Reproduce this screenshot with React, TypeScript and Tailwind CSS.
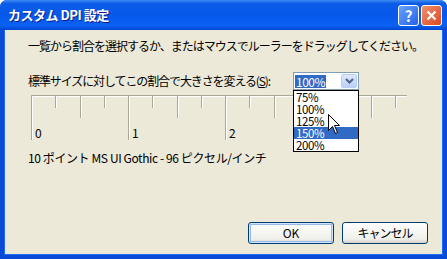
import React from "react";

const font = { fontFamily: '"MS UI Gothic", "Noto Sans CJK JP", sans-serif' };

const scales = ["75%", "100%", "125%", "150%", "200%"];

function Ruler() {
  const ticks = Array.from({ length: 16 }, (_, i) => i);
  return (
    <svg width="380" height="50" className="block">
      <line x1="0" y1="0.5" x2="376" y2="0.5" stroke="#aca899" />
      <line x1="0" y1="1.5" x2="376" y2="1.5" stroke="#ffffff" />
      {ticks.map((i) => {
        const x = Math.round(i * 24.25) + 0.5;
        const len = i % 4 === 0 ? 45 : i % 2 === 0 ? 23 : 13;
        return (
          <g key={i}>
            <line x1={x} y1="0" x2={x} y2={len} stroke="#aca899" />
            <line x1={x + 1} y1="2" x2={x + 1} y2={len} stroke="#ffffff" />
          </g>
        );
      })}
      {/* "3" sits under the open list, so only 0-2 show */}
      {[0, 1, 2].map((n) => (
        <text
          key={n}
          x={Math.round(n * 97) + 4}
          y="43"
          fontSize="12"
          fill="#000"
          style={font}
        >
          {n}
        </text>
      ))}
    </svg>
  );
}

function ScaleSelect() {
  return (
    <div className="relative w-[66px] h-[18px] border border-[#7f9db9] bg-white flex items-center">
      <span className="ml-[1px] px-[1px] h-[13px] leading-[13px] bg-[#316ac5] text-white text-[12px] tracking-[-0.5px]">
        100%
      </span>
      <div className="ml-auto mr-[1px] w-[16px] h-[14px] rounded-[2px] border border-[#b9cdf6] bg-[linear-gradient(#dde8fe,#bcd0fa)] flex items-center justify-center">
        <svg width="9" height="6" viewBox="0 0 9 6">
          <path d="M1 1l3.5 3.5L8 1" fill="none" stroke="#4d6185" strokeWidth="2" />
        </svg>
      </div>
      <div className="absolute left-[-1px] top-[17px] w-[66px] z-10 border border-black bg-white flex flex-col">
        {scales.map((s) => (
          <div
            key={s}
            className={`h-[12px] flex items-center pl-[2px] ${
              s === "150%" ? "bg-[#316ac5] text-white" : "text-black"
            }`}
          >
            <span className="text-[11.5px] leading-[10px] tracking-[-0.4px]">{s}</span>
          </div>
        ))}
      </div>
      <svg
        className="absolute left-[34px] top-[41px] z-20"
        width="13"
        height="21"
        viewBox="0 0 13 21"
      >
        <path
          d="M0.5 0.5V16.5L4.5 12.5L7.5 19.5L9.5 18.5L6.5 11.5H11.5Z"
          fill="#fff"
          stroke="#000"
          strokeLinejoin="miter"
        />
      </svg>
    </div>
  );
}

export default function App() {
  return (
    <div
      className="w-[447px] h-[259px] flex flex-col rounded-t-[7px] overflow-hidden bg-[#0a4ad8]"
      style={font}
    >
      <div className="h-[30px] flex items-center pl-[8px] pr-[5px] bg-[linear-gradient(#3f8cf3_0%,#0a5ce8_12%,#0658ea_50%,#0a61f4_85%,#0046d1_100%)]">
        <span className="text-white text-[13px] font-bold tracking-[-0.5px] [text-shadow:1px_1px_#0a1e8a]">
          カスタム DPI 設定
        </span>
        <div className="ml-auto flex gap-[2px]">
          <div className="w-[21px] h-[21px] rounded-[3px] border border-white bg-[linear-gradient(135deg,#6aa2fb,#2462e8)] flex items-center justify-center text-white font-bold text-[15px] leading-none">
            ?
          </div>
          <div className="w-[21px] h-[21px] rounded-[3px] border border-white bg-[linear-gradient(135deg,#f0906f,#d9491f)] flex items-center justify-center">
            <svg width="11" height="11" viewBox="0 0 11 11">
              <path d="M1.5 1.5l8 8M9.5 1.5l-8 8" stroke="#fff" strokeWidth="2.2" />
            </svg>
          </div>
        </div>
      </div>
      <div className="flex-1 mx-[4px] mb-[4px] bg-[#ece9d8] flex flex-col text-[12px] text-black pl-[23px] pr-[14px] pt-[10px] pb-[10px] border-l border-r border-b border-[#1e6cf0]">
        <p className="h-[12px] leading-[12px] tracking-[-1px] whitespace-nowrap">
          一覧から割合を選択するか、またはマウスでルーラーをドラッグしてください。
        </p>
        <div className="mt-[20px] flex items-center h-[18px]">
          <span className="w-[265px] leading-[12px] tracking-[-1.1px] whitespace-nowrap">
            標準サイズに対してこの割合で大きさを変える(<span className="underline">S</span>):
          </span>
          <ScaleSelect />
        </div>
        <div className="mt-[5px] ml-[3px]">
          <Ruler />
        </div>
        <p className="mt-[7px] h-[12px] leading-[12px] tracking-[-0.4px] whitespace-nowrap">
          10 ポイント MS UI Gothic - 96 ピクセル/インチ
        </p>
        <div className="mt-auto flex justify-end gap-[8px]">
          <button className="w-[86px] h-[22px] rounded-[3px] border border-[#003c74] bg-[linear-gradient(#fefefe,#f0f0ea_80%,#d6d0c5)] shadow-[inset_0_0_0_1px_#cee7ff,inset_0_0_0_2px_#98b8ea] text-[12px] text-black">
            OK
          </button>
          <button className="w-[86px] h-[22px] rounded-[3px] border border-[#003c74] bg-[linear-gradient(#fefefe,#f0f0ea_80%,#d6d0c5)] text-[12px] text-black tracking-[-1px]">
            キャンセル
          </button>
        </div>
      </div>
    </div>
  );
}
